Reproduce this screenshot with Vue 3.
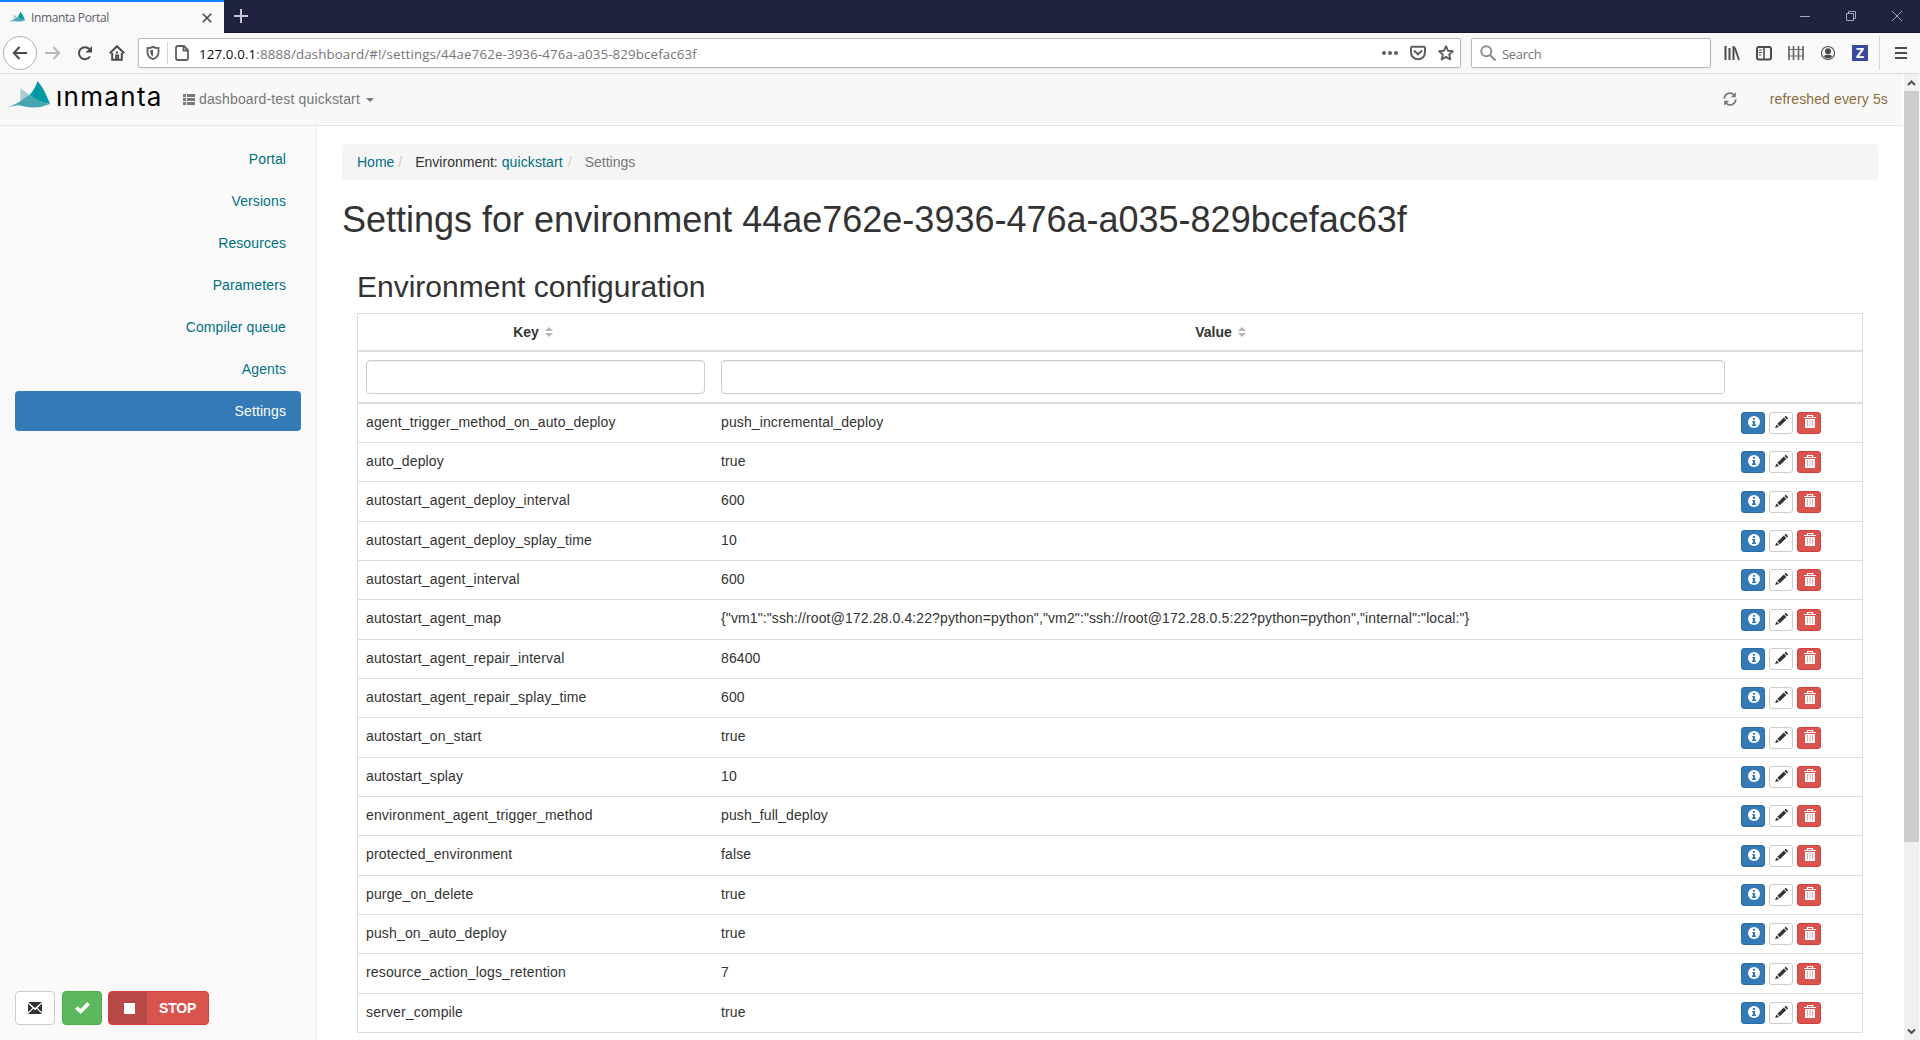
<script setup>
const nav = ['Portal', 'Versions', 'Resources', 'Parameters', 'Compiler queue', 'Agents', 'Settings']
const active = 'Settings'
const rows = [
  ['agent_trigger_method_on_auto_deploy', 'push_incremental_deploy'],
  ['auto_deploy', 'true'],
  ['autostart_agent_deploy_interval', '600'],
  ['autostart_agent_deploy_splay_time', '10'],
  ['autostart_agent_interval', '600'],
  ['autostart_agent_map', '{"vm1":"ssh://root@172.28.0.4:22?python=python","vm2":"ssh://root@172.28.0.5:22?python=python","internal":"local:"}'],
  ['autostart_agent_repair_interval', '86400'],
  ['autostart_agent_repair_splay_time', '600'],
  ['autostart_on_start', 'true'],
  ['autostart_splay', '10'],
  ['environment_agent_trigger_method', 'push_full_deploy'],
  ['protected_environment', 'false'],
  ['purge_on_delete', 'true'],
  ['push_on_auto_deploy', 'true'],
  ['resource_action_logs_retention', '7'],
  ['server_compile', 'true'],
]
</script>

<template>
  <div class="window">
    <div class="tabstrip">
      <div class="tab">
        <svg class="favicon" width="16" height="12" viewBox="0 0 43 28"><path d="M13 7l10 7.500L13 21z" fill="#a5cdd2" /><path d="M30.500 0C36 6 40 15 43 23q-12-2-20-9 5-6 7.500-14z" fill="#0099a5" /><path d="M0 27l13-6.500 10-6q8 6.500 20 8.500-14 6-30 1.500z" fill="#45a5b1" /></svg>
        <span class="tab-title">Inmanta Portal</span>
        <svg width="10" height="10" viewBox="0 0 10 10"><path d="M.8.8l8.4 8.4M9.2.8L.8 9.2" stroke="#444" stroke-width="1.6" /></svg>
      </div>
      <svg class="plus" width="14" height="14" viewBox="0 0 14 14"><path d="M7 0v14M0 7h14" stroke="#c6c6cf" stroke-width="2" /></svg>
      <div class="controls">
        <svg width="10" height="10" viewBox="0 0 10 10"><path d="M0 5.5h10" /></svg>
        <svg width="10" height="10" viewBox="0 0 10 10"><path d="M.5 2.5h7v7h-7zM2.5 2.5v-2h7v7h-2" /></svg>
        <svg width="10" height="10" viewBox="0 0 10 10"><path d="M0 0l10 10M10 0L0 10" /></svg>
      </div>
    </div>

    <div class="toolbar">
      <div class="back"><svg width="16" height="16" viewBox="0 0 16 16" class="ln"><path d="M15 8H2M7.5 2L1.8 8l5.7 6" /></svg></div>
      <svg width="16" height="16" viewBox="0 0 16 16" class="ln dim"><path d="M0 8h14M8.5 2l5.7 6-5.7 6" /></svg>
      <svg width="16" height="16" viewBox="0 0 16 16" class="ln"><path d="M13 11.5A6 6 0 1 1 12.3 4" /><path d="M15 1v6.5H8.5z" fill="#4a4a4f" stroke="none" /></svg>
      <svg width="16" height="16" viewBox="0 0 16 16" class="ln home"><path d="M.8 8.2L8 1.2l7.2 7" /><path d="M3.2 8v6.800h9.600V8" /><path d="M7 15v-4.500h2.200V15M7 7.500h2" stroke-width="1.8" /></svg>
      <div class="urlbar">
        <svg width="14" height="16" viewBox="0 0 14 16"><path d="M7 1.9Q9.5 3.2 12.5 3v4.200c0 3-2 5.700-5.500 7C3.500 12.900 1.500 10.200 1.500 7.200V3Q4.500 3.200 7 1.900z" fill="none" stroke="#5f5f63" stroke-width="1.8" /><path d="M7 4.500v7C5 10.500 4.300 8.800 4.300 7V5.200Q5.700 5.200 7 4.500z" fill="#5f5f63" /></svg>
        <span class="split"></span>
        <svg width="14" height="16" viewBox="0 0 14 16"><path d="M3 1h6l4 4v8q0 2-2 2H3q-2 0-2-2V3q0-2 2-2zM8.500 1v4.500H13" fill="none" stroke="#5f5f63" stroke-width="1.800" /></svg>
        <span class="url"><b>127.0.0.1</b>:8888/dashboard/#!/settings/44ae762e-3936-476a-a035-829bcefac63f</span>
        <svg class="dots" width="16" height="16" viewBox="0 0 16 16" fill="#5f5f63"><circle cx="2" cy="8" r="2" /><circle cx="8" cy="8" r="2" /><circle cx="14" cy="8" r="2" /></svg>
        <svg class="pocket" width="16" height="16" viewBox="0 0 16 16" fill="none" stroke="#5f5f63" stroke-width="2"><path d="M2.200 1.800h11.600q1.200 0 1.200 1.200v4.500a7 6.800 0 0 1-14 0V3q0-1.200 1.200-1.200z" /><path d="M4.500 6L8 9.300 11.500 6" stroke-linecap="round" /></svg>
        <svg class="star" width="16" height="16" viewBox="0 0 16 16"><path d="M8 1.200l2 4.500 4.900.5-3.700 3.300 1.100 4.900L8 11.900l-4.300 2.500 1.100-4.900L1.100 6.200 6 5.700z" fill="none" stroke="#5f5f63" stroke-width="1.900" stroke-linejoin="round" /></svg>
      </div>
      <div class="search">
        <svg width="16" height="16" viewBox="0 0 16 16"><circle cx="6.300" cy="6.300" r="5" fill="none" stroke="#8d8d91" stroke-width="2" /><path d="M10 10l5.500 5.500" stroke="#8d8d91" stroke-width="2.200" /></svg>
        <span>Search</span>
      </div>
      <div class="tools">
        <svg width="16" height="16" viewBox="0 0 16 16" class="ln"><path d="M1.500 1v14M5.500 3v12M9.500 1v14" /><path d="M10.800 2.500L15 15" stroke-width="1.800" /></svg>
        <svg width="16" height="16" viewBox="0 0 16 16" class="ln"><rect x="1" y="2" width="14" height="12.500" rx="2" /><path d="M8 2v12" stroke-width="1.600" /><path d="M3 5h3M3 7.500h3M3 10h2" stroke-width="1" /></svg>
        <svg width="16" height="16" viewBox="0 0 16 16" class="ln grey"><path d="M1 1v14M5.500 1v14M10.500 1v14M15 1v14" stroke-width="1.700" /><path d="M0 4.500h16M0 11h16" stroke-width="1.200" /></svg>
        <svg width="16" height="16" viewBox="0 0 16 16"><circle cx="8" cy="8" r="6.500" fill="none" stroke="#4a4a4f" stroke-width="1.100" /><circle cx="8" cy="6.300" r="3" fill="#4a4a4f" /><path d="M3.800 11.200Q5.500 9.600 8 9.900q2.500-.3 4.200 1.300Q10.500 13.500 8 13.500T3.800 11.200z" fill="#4a4a4f" /></svg>
        <span class="z">Z</span>
      </div>
      <span class="vsep"></span>
      <svg width="16" height="16" viewBox="0 0 16 16" class="ln"><path d="M2 3h12M2 8h12M2 13h12" /></svg>
    </div>

    <div class="viewport">
      <div class="page">
        <header class="navbar">
          <svg class="mark" width="43" height="28" viewBox="0 0 43 28"><path d="M13.300 7.300l10 7.200-10 7z" fill="#a5cdd2" /><path d="M30.500 0C36 6 40 15 43 23q-12-2-20.500-9Q28 8 30.500 0z" fill="#0099a5" /><path d="M.3 26.800Q8 23.500 13.300 20.300L22.500 14q9 7 20.500 9-14 6-29 1.700-5-1.500-13.700 2.100z" fill="#45a5b1" /></svg>
          <span class="brand">ınmanta</span>
          <svg class="list" width="12" height="11" viewBox="0 0 12 11" fill="#777"><path d="M0 0h3v3H0zM4 0h8v3H4zM0 4h3v3H0zM4 4h8v3H4zM0 8h3v3H0zM4 8h8v3H4z" /></svg>
          <span class="env">dashboard-test quickstart</span>
          <i class="caret"></i>
          <svg class="refresh" width="14" height="14" viewBox="0 0 14 14"><path d="M1.300 6.500A5.600 5.600 0 0 1 10.700 2.600M12.700 7.500A5.600 5.600 0 0 1 3.300 11.400" fill="none" stroke="#777" stroke-width="1.700" /><path d="M12.800.3v5H7.800zM1.200 13.700v-5h5z" fill="#777" /></svg>
          <span class="every">refreshed every 5s</span>
        </header>

        <div class="body">
          <aside>
            <nav>
              <a v-for="n in nav" :key="n" :class="{ active: n === active }">{{ n }}</a>
            </nav>
            <div class="actions">
              <button class="btn"><svg width="14" height="12" viewBox="0 0 14 12" fill="#333"><path d="M0 0h14L7 6zM0 1.500L4.500 6 0 10.300zM14 1.500L9.500 6l4.500 4.300zM0 12l5.300-5.200L7 8.200l1.700-1.400L14 12z" /></svg></button>
              <button class="btn green"><svg width="15" height="12" viewBox="0 0 15 12"><path d="M0 6.800L2.600 4.200 5.500 7 12.200 0 15 2.600 5.700 12z" fill="#fff" /></svg></button>
              <div class="stop"><span class="stop-icon"><i></i></span><span class="stop-label">STOP</span></div>
            </div>
          </aside>

          <main>
            <div class="crumbs">
              <a>Home</a><i>/</i><span class="dark">Environment: <a class="env-link">quickstart</a></span><i>/</i><span>Settings</span>
            </div>
            <h1>Settings for environment 44ae762e-3936-476a-a035-829bcefac63f</h1>
            <section>
              <h2>Environment configuration</h2>
              <div class="table">
                <div class="row head">
                  <div v-for="h in ['Key', 'Value']" :key="h" class="th">{{ h }}<svg width="8" height="10" viewBox="0 0 8 10" fill="#b5b5b5"><path d="M0 4l4-4 4 4zM0 6h8L4 10z" /></svg></div>
                  <div></div>
                </div>
                <div class="row filters">
                  <div class="cell"><input type="text" /></div>
                  <div class="cell"><input type="text" /></div>
                  <div></div>
                </div>
                <div v-for="r in rows" :key="r[0]" class="row data">
                  <div class="cell key">{{ r[0] }}</div>
                  <div class="cell value">{{ r[1] }}</div>
                  <div class="cell tools-cell">
                    <button class="xs info"><svg width="12" height="12" viewBox="0 0 12 12"><circle cx="6" cy="6" r="6" fill="#fff" /><path d="M5 2h2v1.800H5zM4.200 5H7v3.500h1V10H4V8.500h1V6.200h-.8z" fill="#337ab7" /></svg></button>
                    <button class="xs"><svg width="13" height="12" viewBox="0 0 13 12" fill="#333"><path d="M10.300 0q.6-.2 1 .2l1.500 1.500q.4.500 0 1l-.8.8-2.500-2.500zM8.800 1.600l2.500 2.500-6.500 6.100-2.500-2.400zM1.600 8.600L4 11l-4 1z" /></svg></button>
                    <button class="xs del"><svg width="12" height="13" viewBox="0 0 12 13"><path d="M3.500 2V.5h5V2M0 2.500h12" fill="none" stroke="#fff" stroke-width="1.200" /><path d="M1 4h10v9H1z" fill="#fff" /><path d="M3.500 5v6.500M6 5v6.500M8.500 5v6.500" stroke="#eba5a2" stroke-width="1" /></svg></button>
                  </div>
                </div>
              </div>
            </section>
          </main>
        </div>
      </div>
      <div class="scrollbar">
        <svg width="15" height="17" viewBox="0 0 15 17"><path d="M4 11l3.500-3.500L11 11" fill="none" stroke="#505050" stroke-width="2" /></svg>
        <span class="thumb"></span>
        <svg class="down" width="15" height="17" viewBox="0 0 15 17"><path d="M4 6.500L7.500 10 11 6.500" fill="none" stroke="#505050" stroke-width="2" /></svg>
      </div>
    </div>
  </div>
</template>

<style>
body { margin: 0; overflow: hidden; }
</style>

<style scoped>
* { box-sizing: border-box; }
svg { display: block; flex: none; }
.window { width: 1920px; height: 1040px; overflow: hidden; display: flex; flex-direction: column; background: #fff; font: 14px/20px "Liberation Sans", Arial, sans-serif; color: #333; white-space: nowrap; }
.tabstrip { height: 33px; flex: none; background: #202340; display: flex; align-items: center; border-bottom: 1px solid #13152b; }
.tab { width: 224px; height: 33px; margin-bottom: -1px; background: #f9f9fa; border-top: 2px solid #0a84ff; display: flex; align-items: center; padding: 0 12px 0 9px; font: 12px/16px "Open Sans", "Noto Sans", sans-serif; color: #5c5c66; }
.favicon { margin-right: 6px; margin-top: -2px; }
.tab-title { flex: 1; letter-spacing: -0.38px; padding-top: 1px; }
.plus { margin-left: 10px; margin-top: -1px; }
.controls { margin-left: auto; display: flex; gap: 36px; padding-right: 18px; }
.controls path { fill: none; stroke: #a5a6b5; stroke-width: 1; }
.toolbar { height: 41px; flex: none; background: #f9f9fa; border-bottom: 1px solid #dcdcde; display: flex; align-items: center; padding: 0 11px 0 3px; }
.ln { fill: none; stroke: #4a4a4f; stroke-width: 2; }
.ln.dim { stroke: #b8b8ba; margin: 0 16px 0 8px; }
.ln.grey { stroke: #6a6a6e; }
.home { margin: 0 13px 0 16px; }
.back { width: 34px; height: 34px; border: 1px solid #b1b1b3; border-radius: 50%; background: #fff; display: flex; align-items: center; justify-content: center; }
.urlbar, .search { height: 30px; background: #fff; border: 1px solid #b9b9bb; border-radius: 2px; display: flex; align-items: center; box-shadow: 0 1px 3px rgba(0, 0, 0, .06); }
.urlbar { flex: 1; padding: 0 6px 0 7px; }
.split { width: 1px; height: 22px; background: #d7d7db; margin: 0 7px; }
.url { flex: 1; margin-left: 10px; padding-top: 2px; font: 13.300px/20px "Open Sans", "Noto Sans", sans-serif; letter-spacing: 0.135px; color: #75757a; }
.url b { font-weight: 400; color: #0c0c0d; }
.pocket, .star { margin-left: 12px; }
.search { width: 240px; margin: 0 13px 0 10px; padding-left: 8px; font: 13px/20px "Open Sans", "Noto Sans", sans-serif; color: #75757a; }
.search span { margin-left: 6px; padding-top: 2px; letter-spacing: -0.3px; }
.tools { display: flex; gap: 16px; }
.z { width: 16px; height: 16px; background: #3a489c; color: #fff; font: 700 14px/16px "Open Sans", sans-serif; text-align: center; }
.vsep { width: 1px; height: 34px; background: #d7d7db; margin: 0 13px 0 11px; }
.viewport { flex: 1; min-height: 0; display: flex; }
.page { flex: 1; min-width: 0; display: flex; flex-direction: column; }
.navbar { height: 52px; flex: none; background: #f8f8f8; border-bottom: 1px solid #e7e7e7; display: flex; align-items: center; padding: 0 16px 1px 7px; color: #777; }
.mark { margin-top: -9px; }
.brand { width: 111px; margin: -4px 0 0 6px; font: 400 26px/32px Inter, "Liberation Sans", sans-serif; letter-spacing: 1.300px; color: #000; }
.list { margin: 1px 4px 0 16px; }
.env { letter-spacing: 0.15px; }
.caret { margin: 2px 0 0 6px; border: 4px solid transparent; border-top-color: #777; border-bottom: 0; }
.refresh { margin-left: auto; }
.every { margin: 0 -1px 0 33px; letter-spacing: 0.13px; color: #8a6d3b; }
.body { flex: 1; min-height: 0; display: flex; }
aside { width: 317px; background: #fafafa; border-right: 1px solid #eee; padding: 13px 15px 15px; display: flex; flex-direction: column; justify-content: space-between; }
nav { display: flex; flex-direction: column; gap: 2px; text-align: right; }
nav a { padding: 10px 15px; height: 40px; border-radius: 4px; letter-spacing: 0.1px; }
nav a.active { background: #337ab7; color: #fff; }
.actions { display: flex; }
.btn { width: 40px; height: 34px; padding: 0 0 1px; margin-right: 7px; border: 1px solid #ccc; border-radius: 4px; background: #fff; display: flex; align-items: center; justify-content: center; }
.green { background: #5cb85c; border-color: #4cae4c; margin-right: 6px; }
.stop { width: 101px; height: 34px; border: 1px solid #d43f3a; border-radius: 4px; background: #d9534f; display: flex; overflow: hidden; color: #fff; font-weight: 700; line-height: 32px; }
.stop-icon { width: 38px; background: #b84845; display: flex; align-items: center; justify-content: center; }
.stop-icon i { width: 11px; height: 11px; background: #fff; margin-left: 2px; }
.stop-label { flex: 1; padding-left: 12px; letter-spacing: -0.2px; }
main { flex: 1; min-width: 0; padding: 18px 25px 0; }
.crumbs { width: 1536px; height: 36px; background: #f5f5f5; border-radius: 4px; padding: 8px 15px; display: flex; color: #777; }
a { color: #017082; }
.env-link { letter-spacing: 0.12px; margin-right: 1px; }
.crumbs i { font-style: normal; color: #ccc; margin: 0 13px 0 4px; }
.dark { color: #333; }
h1 { font-size: 36px; line-height: 39.6px; font-weight: 400; margin: 20px 0 10px; }
section { padding: 20px 15px 0; }
h2 { font-size: 30px; line-height: 33px; font-weight: 400; margin: 0 0 10px; }
.table { width: 1506px; border-left: 1px solid #ddd; border-right: 1px solid #ddd; border-bottom: 1px solid #ddd; }
.row { display: grid; grid-template-columns: 355px 1020px 1fr; border-top: 1px solid #ddd; }
.head { height: 37.400px; font-weight: 700; }
.th { display: flex; align-items: center; justify-content: center; }
.th svg { margin: 1px 5px 0 6px; }
.filters { height: 52.640px; border-top-width: 2px; border-bottom: 1px solid #ddd; }
.cell { padding: 8px; overflow: hidden; }
.key { letter-spacing: 0.15px; }
.value { letter-spacing: 0.118px; }
input { display: block; width: 100%; height: 34px; border: 1px solid #ccc; border-radius: 4px; background: #fff; box-shadow: inset 0 1px 1px rgba(0, 0, 0, .075); }
.data { height: 39.333px; }
.tools-cell { display: flex; gap: 4px; padding-top: 8.300px; }
.xs { width: 24px; height: 22px; padding: 0 0 2px 1px; border: 1px solid #ccc; border-radius: 3px; background: #fff; display: flex; align-items: center; justify-content: center; }
.info { background: #337ab7; border-color: #2e6da4; }
.del { background: #d9534f; border-color: #d43f3a; }
.scrollbar { width: 17px; background: #f0f0f0; border-left: 1px solid #fff; border-right: 1px solid #fafafa; display: flex; flex-direction: column; }
.thumb { height: 751px; background: #cdcdcd; }
.down { margin-top: auto; }
</style>
